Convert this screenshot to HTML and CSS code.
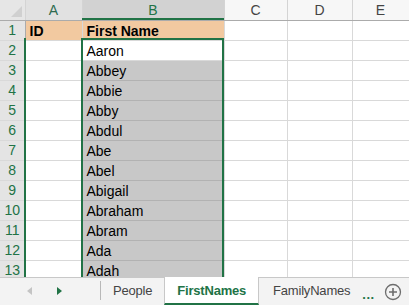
FILE: index.html
```html
<!DOCTYPE html>
<html lang="en">
<head>
    <meta charset="UTF-8">
    <meta name="viewport" content="width=device-width, initial-scale=1.0">
    <title>FirstNames</title>
    <link rel="stylesheet" href="styles.css">
</head>
<body>
    <div class="sheet">
        <table class="grid">
            <colgroup>
                <col style="width:25px">
                <col style="width:57px">
                <col style="width:142px">
                <col style="width:63px">
                <col style="width:65px">
                <col style="width:57px">
            </colgroup>
            <tr class="col-heads">
                <th class="corner"><span class="corner-mark"></span></th>
                <th class="on">A</th>
                <th class="on active">B</th>
                <th>C</th>
                <th>D</th>
                <th>E</th>
            </tr>
            <tr>
                <th class="row-head">1</th>
                <td class="title">ID</td>
                <td class="title">First Name</td>
                <td></td><td></td><td></td>
            </tr>
            <tr><th class="row-head">2</th><td></td><td class="current">Aaron</td><td></td><td></td><td></td></tr>
            <tr><th class="row-head">3</th><td></td><td class="picked">Abbey</td><td></td><td></td><td></td></tr>
            <tr><th class="row-head">4</th><td></td><td class="picked">Abbie</td><td></td><td></td><td></td></tr>
            <tr><th class="row-head">5</th><td></td><td class="picked">Abby</td><td></td><td></td><td></td></tr>
            <tr><th class="row-head">6</th><td></td><td class="picked">Abdul</td><td></td><td></td><td></td></tr>
            <tr><th class="row-head">7</th><td></td><td class="picked">Abe</td><td></td><td></td><td></td></tr>
            <tr><th class="row-head">8</th><td></td><td class="picked">Abel</td><td></td><td></td><td></td></tr>
            <tr><th class="row-head">9</th><td></td><td class="picked">Abigail</td><td></td><td></td><td></td></tr>
            <tr><th class="row-head">10</th><td></td><td class="picked">Abraham</td><td></td><td></td><td></td></tr>
            <tr><th class="row-head">11</th><td></td><td class="picked">Abram</td><td></td><td></td><td></td></tr>
            <tr><th class="row-head">12</th><td></td><td class="picked">Ada</td><td></td><td></td><td></td></tr>
            <tr><th class="row-head">13</th><td></td><td class="picked">Adah</td><td></td><td></td><td></td></tr>
        </table>

        <!-- selection outlines drawn over the grid -->
        <div class="mark head-line"></div>
        <div class="mark cell-top"></div>
        <div class="mark edge edge-a"></div>
        <div class="mark edge edge-ab"></div>
        <div class="mark edge edge-b"></div>
    </div>

    <div class="tabs">
        <div class="tab-nav">
            <span class="arrow arrow-left"></span>
            <span class="arrow arrow-right"></span>
        </div>
        <div class="tab">People</div>
        <div class="tab tab-active">FirstNames</div>
        <div class="tab">FamilyNames</div>
        <div class="more">...</div>
        <div class="add">
            <svg width="18" height="18" viewBox="0 0 18 18">
                <circle cx="9" cy="9" r="7.5" fill="none" stroke="#6d6d6d" stroke-width="1.3"/>
                <path d="M9 5v8M5 9h8" stroke="#6d6d6d" stroke-width="1.6"/>
            </svg>
        </div>
    </div>
</body>
</html>
```

FILE: styles.css
```css
body {
    margin: 0;
    width: 409px;
    height: 305px;
    overflow: hidden;
    background: #fff;
    font-family: "Liberation Sans", Arial, sans-serif;
}
.sheet {
    position: relative;
    height: 277px;
    overflow: hidden;
}
.grid {
    table-layout: fixed;
    border-collapse: collapse;
    width: 409px;
}
.grid th,
.grid td {
    box-sizing: border-box;
    height: 20px;
    padding: 0;
    border-right: 1px solid #d9d9d9;
    border-bottom: 1px solid #d9d9d9;
    white-space: nowrap;
    overflow: hidden;
}
.grid td {
    padding: 0 4px;
    font-size: 14px;
    color: #000;
    vertical-align: bottom;
    line-height: 17px;
}
.col-heads th {
    background: #f7f7f7;
    font-weight: normal;
    font-size: 14px;
    color: #444;
    border-bottom: 1px solid #ababab;
    border-right: 1px solid #d4d4d4;
    height: 20px;
}
.col-heads th.on {
    background: #e1e1e1;
    color: #2f6a4f;
}
.col-heads th.active {
    background: #d2d2d2;
    color: #217346;
}
.corner {
    position: relative;
    background: #e6e6e6 !important;
}
.corner-mark {
    position: absolute;
    right: 3px;
    bottom: 3px;
    width: 0;
    height: 0;
    border-left: 11px solid transparent;
    border-bottom: 11px solid #d0d0d0;
}
.row-head {
    background: #e4e4e4;
    font-weight: normal;
    font-size: 14px;
    color: #217346;
    text-align: center;
    border-right: 1px solid #ababab !important;
}
.title {
    background: #f2c9a0;
    font-weight: bold;
}
.picked {
    background: #c8c8c8;
    border-bottom-color: #b2b2b2 !important;
}
.mark {
    position: absolute;
    background: #217346;
}
.head-line {
    left: 82px;
    top: 18px;
    width: 142px;
    height: 2px;
}
.cell-top {
    left: 82px;
    top: 38px;
    width: 142px;
    height: 2px;
}
.edge {
    top: 38px;
    width: 2px;
    height: 240px;
}
.edge-a {
    left: 24px;
}
.edge-ab {
    left: 81px;
}
.edge-b {
    left: 222px;
}
.tabs {
    display: flex;
    align-items: stretch;
    height: 27px;
    border-top: 1px solid #c8c8c8;
    background: #f3f3f3;
    font-size: 13px;
    color: #444;
}
.tab-nav {
    width: 100px;
    display: flex;
    align-items: center;
    margin: 3px 0 5px;
    border-right: 1px solid #b8b8b8;
}
.arrow {
    width: 0;
    height: 0;
    border-top: 4px solid transparent;
    border-bottom: 4px solid transparent;
}
.arrow-left {
    margin-left: 27px;
    border-right: 5px solid #c4c4c4;
}
.arrow-right {
    margin-left: 25px;
    border-left: 5px solid #217346;
}
.tab {
    display: flex;
    align-items: center;
    padding: 0 12px 2px 12px;
    letter-spacing: -0.2px;
}
.tab-active {
    background: #fff;
    color: #217346;
    font-weight: bold;
    border-left: 1px solid #c8c8c8;
    border-right: 1px solid #c8c8c8;
    border-bottom: 2px solid #217346;
    padding-bottom: 0;
    margin-top: -1px;
}
.tab-active + .tab {
    padding-left: 14px;
}
.more {
    display: flex;
    align-items: center;
    padding: 5px 0 0 0;
    margin-left: 0;
    color: #217346;
    font-weight: bold;
    letter-spacing: 0.5px;
}
.add {
    display: flex;
    align-items: center;
    margin-left: auto;
    padding-right: 7px;
}
```
